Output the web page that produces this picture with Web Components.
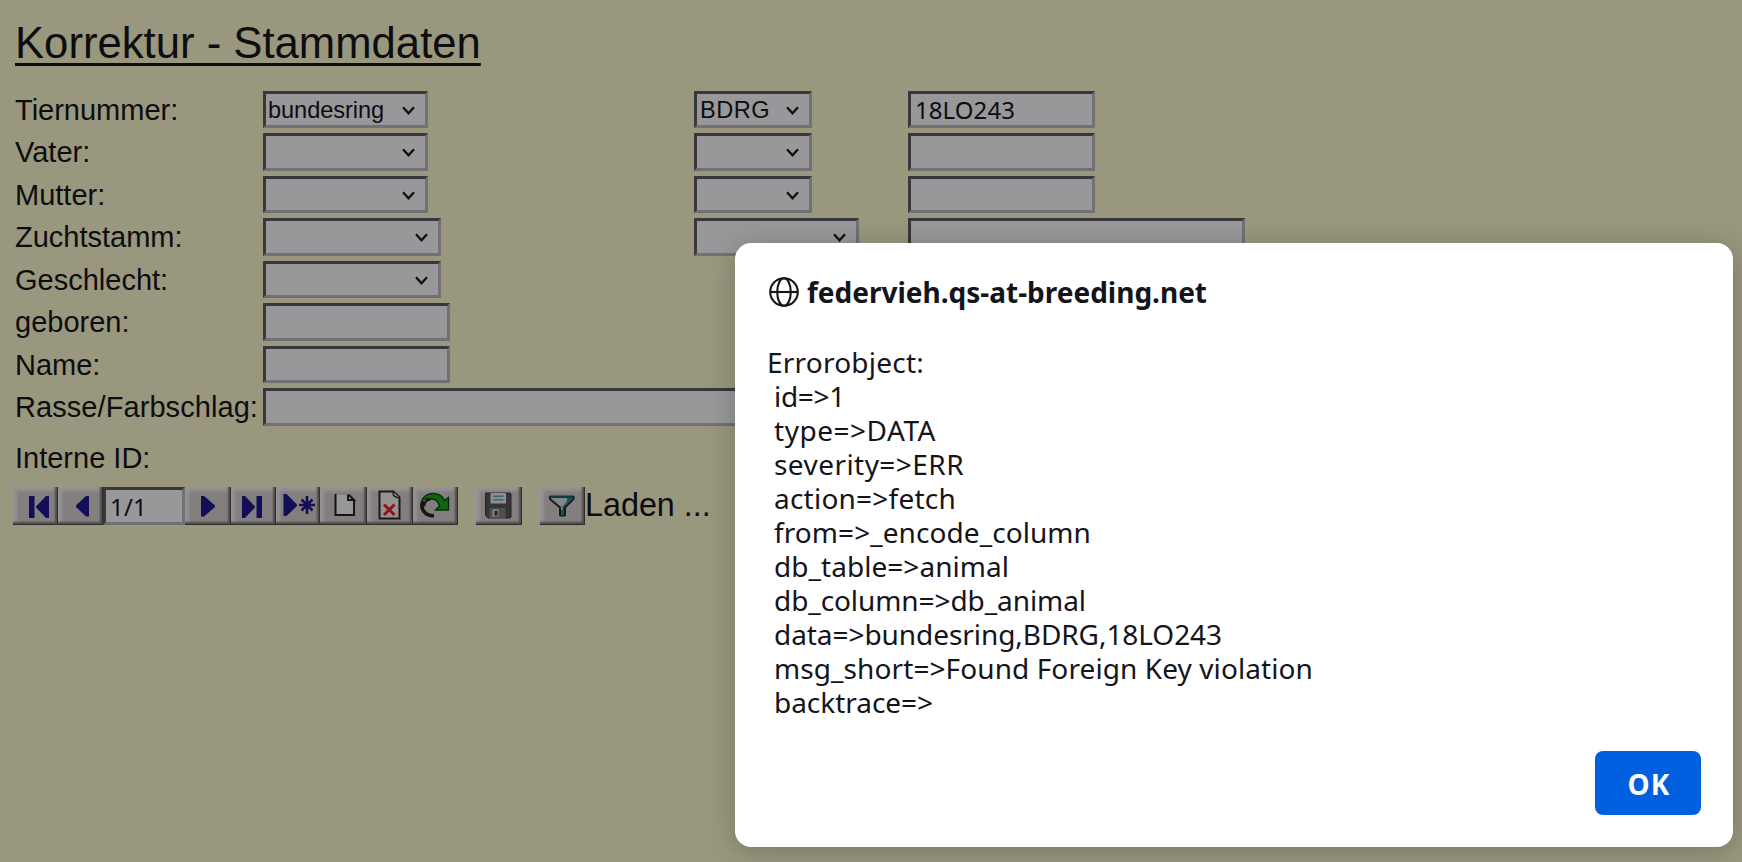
<!DOCTYPE html>
<html lang="de">
<head>
<meta charset="utf-8">
<title>Korrektur - Stammdaten</title>
<style>
html,body{margin:0;height:100%;overflow:hidden;background:#99977d}
</style>
</head>
<body>
<stamm-page></stamm-page>

<script>
const define = (name, html, setup) => customElements.define(name, class extends HTMLElement {
  constructor() {
    super();
    const t = document.createElement('template');
    t.innerHTML = html.trim();
    this.attachShadow({ mode: 'open' }).append(t.content.cloneNode(true));
  }
  connectedCallback() { if (setup) setup(this, this.shadowRoot); }
});

/* One line of text, tracked so that it fills the given width */
define('fit-text', `
<style>:host{display:block;white-space:normal}span{display:inline-block;vertical-align:top;white-space:pre}</style>
<span><slot></slot></span>`, (el, root) => {
  const span = root.querySelector('span');
  const want = +el.getAttribute('width');
  const n = el.textContent.length;
  const fit = () => {
    span.style.letterSpacing = '0px';
    const w = span.getBoundingClientRect().width;
    if (w && n) span.style.letterSpacing = ((want - w) / n) + 'px';
  };
  fit();
  requestAnimationFrame(fit);
});

/* Sunken box shared by text inputs and selects; w = outer width */
define('form-input', `
<style>
:host{display:block;box-sizing:border-box;height:100%;background:#98979a;border:3px solid;
border-color:#38373b #717074 #717074 #38373b;padding-left:4px;
font:24px/31px "Noto Sans",sans-serif;color:#0d0d10}
</style><slot></slot>`, el => { el.style.width = el.getAttribute('w') + 'px'; });

define('form-select', `
<style>
:host{display:flex;justify-content:space-between;box-sizing:border-box;height:100%;background:#98979a;border:3px solid;
border-color:#38373b #717074 #717074 #38373b;padding:0 10px 0 2px;
font:23.6px/32px "Liberation Sans",Arial,sans-serif;color:#0d0d10}
svg{display:block;margin-top:12px;flex:none}
</style><span><slot></slot></span>
<svg width="13" height="9" viewBox="0 0 13 9"><path d="M1 1.200 6.500 7.300 12 1.200" fill="none" stroke="#111114" stroke-width="2.300"/></svg>`,
el => { el.style.width = el.getAttribute('w') + 'px'; });

const ICONS = {
  first: '<path fill="#120e58" d="M16 9h5.500v22H16zM36 9v22h-3L23 20.500v-1L33 9z"/>',
  prev: '<path fill="#120e58" d="M31 9v20.500h-3L18 20v-1.500L28 9z"/>',
  next: '<path fill="#120e58" d="M16 9v20.500h3L30 20v-1.500L19 9z"/>',
  last: '<path fill="#120e58" d="M11 9v22h3l10-10.500v-1L14 9zM25.500 9H31v22h-5.500z"/>',
  add: '<path fill="#120e58" d="M7.500 7v22h3L21 19v-1.500L10.500 7z"/><path stroke="#120e58" stroke-width="2.600" fill="none" d="M31 9v18M23 18h16M25.500 12.500l11 11M36.500 12.500l-11 11"/>',
  page: '<path fill="#98979a" d="M15 8h12.500L33 13.500V28H15z"/><path fill="none" stroke="#141414" stroke-width="2" d="M15.500 7v21H34V13.500"/><path fill="#98979a" stroke="#141414" stroke-width="2" d="M28 8.500V13h6l-4.500-4.500z"/>',
  del: '<path fill="#95938f" stroke="#181818" stroke-width="2" d="M12.500 4.500h14l6 6V31.500h-20z"/><path fill="#98979a" stroke="#222" stroke-width="1.700" d="M26 4.500c0 4 1 6 6.500 6.500"/><path stroke="#8f1518" stroke-width="3" d="M17 17.500l10.500 10.500M27.500 17.500L17 28"/>',
  redo: '<path fill="none" stroke="#141814" stroke-width="3.600" d="M10 14c-3.500 7.500 1.500 14.500 11 15"/><path fill="none" stroke="#141814" stroke-width="2.500" d="M11 19.500c0-4 3-7 7-7.500"/><path fill="#0f650f" stroke="#0b2c0c" stroke-width="1.400" d="M9 13c3-6 9.500-8 16-5.700 3.500 1.200 5.500 3.500 6.500 6.200l4-3v12.500H22.500l4-4c-1-5-5.500-8-10.500-7.500-3 .2-5 1.500-7 1.500z"/>',
  save: '<path fill="#353538" stroke="#242427" d="M10 6h24l1 1v23l-1 1H12l-2.500-2.500V6z"/><path fill="#8d8e8f" d="M14.500 6h15.500v10.500H14.500z"/><path stroke="#336a70" stroke-width="1.500" d="M17 9.300h10.500M17 12.800h10.500"/><path fill="#505052" d="M13.500 21h16v10h-16z"/><path fill="#868688" d="M16.500 22.500h6v7h-6z"/><path fill="#222224" d="M18.500 24h3v4.500h-3z"/>',
  filter: '<path fill="#858587" stroke="#161c1e" stroke-width="2" stroke-linejoin="round" d="M10 9.800h23.500v2.200L25 20.500v8h-5v-8L10 12z"/><path fill="#125459" d="M27 10.800h5.500v1L24 20.300v7.500h-3V23h1.500v-3.500l4.500-5z"/><path stroke="#0f3e42" stroke-width="1.800" d="M10 9.600h23"/>'
};
define('tool-button', `
<style>
:host{display:block;box-sizing:border-box;height:38px;background:#837f7e;overflow:hidden;
box-shadow:inset -1px -1px 0 #2f2d2d,inset -3px -3px 2px #504d4d,inset 1px 1px 0 #949396,inset 4px 4px 3px #939295}
svg{display:block;filter:blur(.35px)}
</style><svg width="46" height="38" viewBox="0 0 46 38"></svg>`, (el, root) => {
  el.style.width = el.getAttribute('w') + 'px';
  root.querySelector('svg').innerHTML = ICONS[el.getAttribute('icon')];
});

define('record-bar', `
<style>
:host{display:flex;height:38px;color:#0d0d10}
.gap{width:18px}
.state{font:32.3px/36px "Liberation Sans",Arial,sans-serif}
form-input{line-height:33px}
</style>
<tool-button icon="first" w="45"></tool-button><tool-button icon="prev" w="45"></tool-button>
<form-input w="82"><fit-text width="37">1/1</fit-text></form-input>
<tool-button icon="next" w="46"></tool-button><tool-button icon="last" w="45"></tool-button>
<tool-button icon="add" w="44"></tool-button><tool-button icon="page" w="47"></tool-button>
<tool-button icon="del" w="46"></tool-button><tool-button icon="redo" w="45"></tool-button>
<div class="gap"></div><tool-button icon="save" w="46"></tool-button>
<div class="gap"></div><tool-button icon="filter" w="45"></tool-button><span class="state">Laden ...</span>`);

define('alert-dialog', `
<style>
:host{display:flex;flex-direction:column;box-sizing:border-box;width:998px;height:604px;background:#fff;border-radius:16px;
padding:32px;box-shadow:0 4px 28px rgba(0,0,0,.22);color:#15141a;font:28px/34px "Noto Sans",sans-serif}
header{display:flex;align-items:center;gap:8px;height:34px;margin:0 0 36px 2px;font-weight:700}
svg{display:block;flex:none}
.body{display:flex;flex-direction:column}
footer{display:flex;margin-top:auto;justify-content:flex-end}
.ok{display:grid;place-items:center;box-sizing:border-box;padding:1px 0 0 2px;width:106px;height:64px;border-radius:8px;background:#0060df;color:#fbfbfe;font-weight:700}
</style>
<header>
<svg width="30" height="30" viewBox="0 0 30 30" fill="none" stroke="#15141a" stroke-width="2.100"><circle cx="15" cy="15" r="13.800"/><ellipse cx="15" cy="15" rx="6.800" ry="13.800"/><path d="M1.500 15h27"/></svg>
<slot name="origin"></slot></header>
<div class="body"><slot></slot></div>
<footer><div class="ok"><fit-text width="43">OK</fit-text></div></footer>`);

define('stamm-page', `
<style>
:host{display:block;box-sizing:border-box;width:1742px;height:862px;padding:18px 0 0 15px;background:#99977d;
color:#0d0d10;font:29px/38px "Liberation Sans",Arial,sans-serif;position:relative;overflow:hidden}
h1{margin:0;font-size:43.67px;line-height:50px;height:73px;font-weight:400}
h1 span{text-decoration:underline;text-decoration-thickness:3px;text-underline-offset:5px;text-decoration-skip-ink:none}
.form{display:grid;grid-template-columns:248px 431px 214px 1fr;row-gap:5px;
grid-template-rows:37px 38px 37px 38px 37px 38px 37px 38px}
.wide{grid-column:2/5}
.n{grid-column:1}
.id{margin-top:13px;height:38px}
record-bar{margin:10px 0 0 -2px}
alert-dialog{position:absolute;left:735px;top:243px}
.in{margin-left:7px}
</style>
<h1><span>Korrektur - Stammdaten</span></h1>
<div class="form">
<span>Tiernummer:</span><form-select w="165"><fit-text width="116">bundesring</fit-text></form-select><form-select w="118" style="padding-left:3px"><fit-text width="70">BDRG</fit-text></form-select><form-input w="187"><fit-text width="100">18LO243</fit-text></form-input>
<span>Vater:</span><form-select w="165"></form-select><form-select w="118"></form-select><form-input w="187"></form-input>
<span>Mutter:</span><form-select w="165"></form-select><form-select w="118"></form-select><form-input w="187"></form-input>
<span>Zuchtstamm:</span><form-select w="178"></form-select><form-select w="165"></form-select><form-input w="337"></form-input>
<span class="n">Geschlecht:</span><form-select w="178"></form-select>
<span class="n">geboren:</span><form-input w="187"></form-input>
<span class="n">Name:</span><form-input w="187"></form-input>
<span class="n"><fit-text width="243">Rasse/Farbschlag:</fit-text></span><form-input class="wide" w="982"></form-input>
</div>
<div class="id">Interne ID:</div>
<record-bar></record-bar>
<alert-dialog>
<fit-text slot="origin" width="400">federvieh.qs-at-breeding.net</fit-text>
<fit-text width="157">Errorobject:</fit-text>
<fit-text class="in" width="71">id=&gt;1</fit-text>
<fit-text class="in" width="162">type=&gt;DATA</fit-text>
<fit-text class="in" width="190">severity=&gt;ERR</fit-text>
<fit-text class="in" width="182">action=&gt;fetch</fit-text>
<fit-text class="in" width="317">from=&gt;_encode_column</fit-text>
<fit-text class="in" width="235">db_table=&gt;animal</fit-text>
<fit-text class="in" width="312">db_column=&gt;db_animal</fit-text>
<fit-text class="in" width="448">data=&gt;bundesring,BDRG,18LO243</fit-text>
<fit-text class="in" width="539">msg_short=&gt;Found Foreign Key violation</fit-text>
<fit-text class="in" width="159">backtrace=&gt;</fit-text>
</alert-dialog>`);
</script>
</body>
</html>
